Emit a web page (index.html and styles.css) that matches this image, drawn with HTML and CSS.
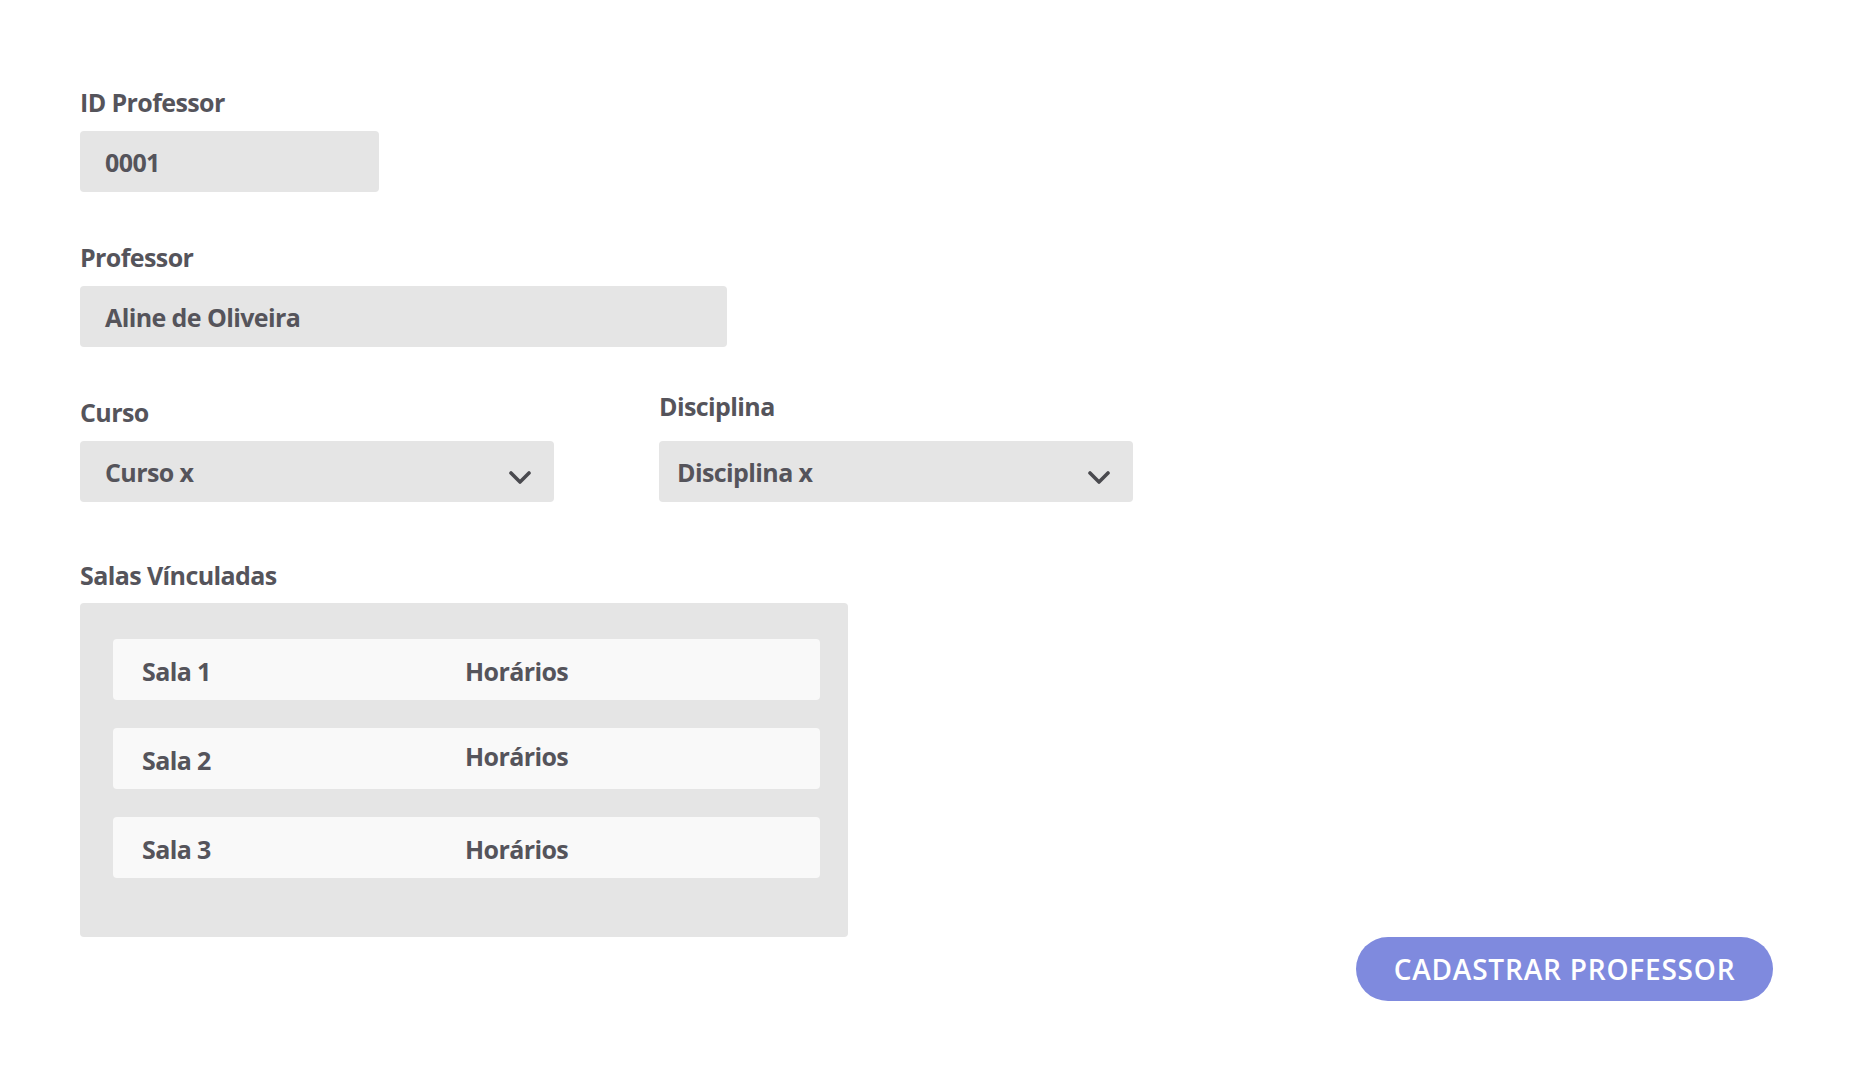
FILE: index.html
```html
<!DOCTYPE html>
<html lang="pt-BR">
<head>
<meta charset="utf-8">
<title>Cadastrar Professor</title>
<link rel="stylesheet" href="styles.css">
</head>
<body>
<main class="form">
  <div class="field field--first">
    <label class="label">ID Professor</label>
    <div class="input input--id">0001</div>
  </div>

  <div class="field field--gap">
    <label class="label">Professor</label>
    <div class="input input--name">Aline de Oliveira</div>
  </div>

  <div class="select-row">
    <div class="field">
      <label class="label">Curso</label>
      <div class="input select">
        <span>Curso x</span>
        <svg class="chevron" viewBox="0 0 22 13" width="22" height="13"><path d="M2 2 L11 11 L20 2" fill="none" stroke="#4a4a4f" stroke-width="3.6" stroke-linecap="round" stroke-linejoin="round"/></svg>
      </div>
    </div>
    <div class="field">
      <label class="label label--raised">Disciplina</label>
      <div class="input select select--tight">
        <span>Disciplina x</span>
        <svg class="chevron" viewBox="0 0 22 13" width="22" height="13"><path d="M2 2 L11 11 L20 2" fill="none" stroke="#4a4a4f" stroke-width="3.6" stroke-linecap="round" stroke-linejoin="round"/></svg>
      </div>
    </div>
  </div>

  <div class="field field--salas">
    <label class="label label--salas">Salas Vínculadas</label>
    <div class="salas">
      <div class="sala">
        <span class="sala-name">Sala 1</span>
        <span class="sala-hours">Horários</span>
      </div>
      <div class="sala">
        <span class="sala-name">Sala 2</span>
        <span class="sala-hours sala-hours--raised">Horários</span>
      </div>
      <div class="sala">
        <span class="sala-name">Sala 3</span>
        <span class="sala-hours">Horários</span>
      </div>
    </div>
  </div>

  <div class="actions">
    <button class="btn" type="button">CADASTRAR PROFESSOR</button>
  </div>
</main>
</body>
</html>
```

FILE: styles.css
```css
* { box-sizing: border-box; }

html, body {
  margin: 0;
  padding: 0;
  background: #ffffff;
}

body {
  font-family: "Open Sans", "Noto Sans", sans-serif;
  font-weight: 700;
  letter-spacing: -0.6px;
  color: #55545b;
  font-size: 25px;
}

.form {
  padding: 87px 86px 0 80px;
}

.field {
  display: flex;
  flex-direction: column;
  align-items: flex-start;
}

.field--gap {
  margin-top: 50px;
}

.label {
  display: block;
  height: 30px;
  line-height: 30px;
  margin-bottom: 14px;
  white-space: nowrap;
}

.label--raised {
  margin-bottom: 20px;
}

.label--salas {
  margin-bottom: 13px;
}

.input {
  background: #e5e5e5;
  border-radius: 4px;
  height: 61px;
  line-height: 60px;
  padding: 1px 25px 0 25px;
  white-space: nowrap;
}

.input--id { width: 299px; }
.input--name { width: 647px; }

.select-row {
  display: flex;
  align-items: flex-end;
  gap: 105px;
  margin-top: 44px;
}

.select {
  width: 474px;
  display: flex;
  align-items: center;
  justify-content: space-between;
  padding-right: 23px;
}

.select--tight {
  width: 474px;
  padding-left: 18px;
}

.chevron {
  display: block;
  margin-top: 11px;
}

.field--salas {
  margin-top: 58px;
}

.salas {
  width: 768px;
  background: #e5e5e5;
  border-radius: 4px;
  padding: 36px 28px 59px 33px;
  display: flex;
  flex-direction: column;
  gap: 28px;
}

.sala {
  height: 61px;
  background: #f9f9f9;
  border-radius: 4px;
  display: flex;
  align-items: center;
  padding: 2px 0 0 29px;
}

.sala-name {
  width: 323px;
  line-height: 34px;
}

.sala-hours {
  line-height: 34px;
}

.sala-hours--raised {
  margin-bottom: 7px;
}

.actions {
  display: flex;
  justify-content: flex-end;
}

.btn {
  font-family: "Open Sans", "Noto Sans", sans-serif;
  font-weight: 600;
  font-size: 28px;
  letter-spacing: 0.8px;
  color: #ffffff;
  background: #7f8ade;
  border: none;
  border-radius: 32px;
  width: 417px;
  height: 64px;
  padding: 0;
  line-height: 64px;
  cursor: pointer;
}
```
